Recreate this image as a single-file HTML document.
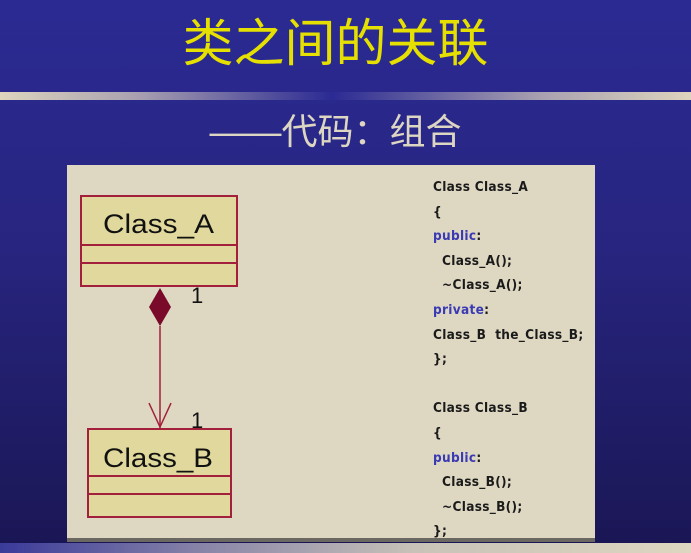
<!DOCTYPE html>
<html><head><meta charset="utf-8"><style>
html,body{margin:0;padding:0}
body{width:691px;height:553px;overflow:hidden;position:relative;background:linear-gradient(#2b2a93 0%,#27257f 45%,#1a1654 100%);font-family:"Liberation Sans","Noto Sans CJK SC",sans-serif}
.title{position:absolute;left:0;width:671px;top:12px;text-align:center;color:#e6e000;font-size:51px;line-height:64px}
.bar{position:absolute;left:0;top:92px;width:691px;height:8px;background:linear-gradient(90deg,#ddd5bd 0%,#a8a0b0 20%,#2b2a93 48%,#a8a0b0 78%,#ddd5bd 100%)}
.sub{position:absolute;left:0;width:671px;top:108px;text-align:center;color:#dcd6c2;font-size:36px;line-height:48px}
.panel{position:absolute;left:67px;top:165px;width:528px;height:373px;background:#ded8c3;border-bottom:4px solid #6a6860}
.bot{position:absolute;left:0;top:543px;width:691px;height:10px;background:linear-gradient(90deg,#3a3a9a 0%,#8a86a8 30%,#c8c2b8 60%,#ddd6c0 100%)}
.code{position:absolute;left:433px;top:175px;font-weight:bold;font-size:13.5px;color:#1a1a1a;line-height:24.6px;white-space:pre;letter-spacing:0.3px;font-family:"DejaVu Sans Condensed","Liberation Sans",sans-serif}
.k{color:#3a3ab4}
</style></head><body>
<div class="title">类之间的关联</div>
<div class="bar"></div>
<div class="sub">——代码：组合</div>
<div class="panel"></div>
<svg style="position:absolute;left:0;top:0" width="691" height="553">
<g fill="#e0d89c" stroke="#a2203c" stroke-width="2">
<rect x="81" y="196" width="156" height="90"/>
<line x1="81" y1="245" x2="237" y2="245"/>
<line x1="81" y1="263" x2="237" y2="263"/>
<rect x="88" y="429" width="143" height="88"/>
<line x1="88" y1="476" x2="231" y2="476"/>
<line x1="88" y1="494" x2="231" y2="494"/>
</g>
<line x1="160" y1="326" x2="160" y2="428" stroke="#a2203c" stroke-width="1.5"/>
<polygon points="160,288 171,307 160,326 149,307" fill="#7a0a2a"/>
<polyline points="149,403 160,427 171,403" fill="none" stroke="#a2203c" stroke-width="1.5"/>
<g font-family="Liberation Sans,sans-serif" fill="#111">
<text x="103" y="233" font-size="27" textLength="111" lengthAdjust="spacingAndGlyphs">Class_A</text>
<text x="103" y="467" font-size="27" textLength="110" lengthAdjust="spacingAndGlyphs">Class_B</text>
<text x="191" y="303" font-size="22">1</text>
<text x="191" y="428" font-size="22">1</text>
</g>
</svg>
<div class="code">Class Class_A
{
<span class="k">public</span>:
  Class_A();
  ~Class_A();
<span class="k">private</span>:
Class_B  the_Class_B;
};

Class Class_B
{
<span class="k">public</span>:
  Class_B();
  ~Class_B();
};</div>
<div class="bot"></div>
</body></html>
